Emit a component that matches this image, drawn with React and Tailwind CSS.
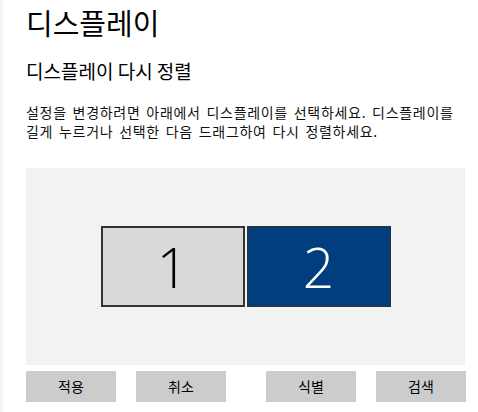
import React from 'react';

const font = { fontFamily: '"Noto Sans CJK KR", "Noto Sans", sans-serif' };

const Monitor = ({ label, active }) => (
  <div
    className={`w-[144px] h-[81px] flex items-center justify-center border-2 ${
      active ? 'bg-[#003e7e] border-[#1d3550] text-white' : 'bg-[#d9d9d9] border-[#333333] text-black'
    }`}
  >
    <span className="text-[55px] font-light leading-none" style={{ fontFamily: '"Open Sans", sans-serif' }}>
      {label}
    </span>
  </div>
);

const Button = ({ children, className = '' }) => (
  <button className={`w-[90px] h-[31px] bg-[#cccccc] text-[14px] text-black ${className}`}>{children}</button>
);

export default function App() {
  return (
    <div className="w-[478px] h-[412px] bg-white flex overflow-hidden" style={font}>
      <div className="w-[3px] bg-[#f6f6f6]" />
      <div className="flex-1 pl-[23px] pt-[2px]">
        {/* 제목 */}
        <h1 className="text-[29px] leading-[40px] text-black font-normal">디스플레이</h1>
        <h2 className="mt-[16px] text-[19px] leading-[26px] text-black font-normal">디스플레이 다시 정렬</h2>
        <p className="mt-[19px] text-[14px] leading-[19px] tracking-[0.7px] [word-spacing:2px] text-[#111] whitespace-nowrap">
          설정을 변경하려면 아래에서 디스플레이를 선택하세요. 디스플레이를
          <br />
          길게 누르거나 선택한 다음 드래그하여 다시 정렬하세요.
        </p>

        {/* 디스플레이 배치 영역 */}
        <div className="mt-[27px] w-[439px] h-[197px] bg-[#f2f2f2] flex items-center justify-center gap-[2px]">
          <Monitor label="1" />
          <Monitor label="2" active />
        </div>

        <div className="mt-[6px] flex">
          <Button>적용</Button>
          <Button className="ml-[20px]">취소</Button>
          <Button className="ml-[40px]">식별</Button>
          <Button className="ml-[20px]">검색</Button>
        </div>
      </div>
    </div>
  );
}
